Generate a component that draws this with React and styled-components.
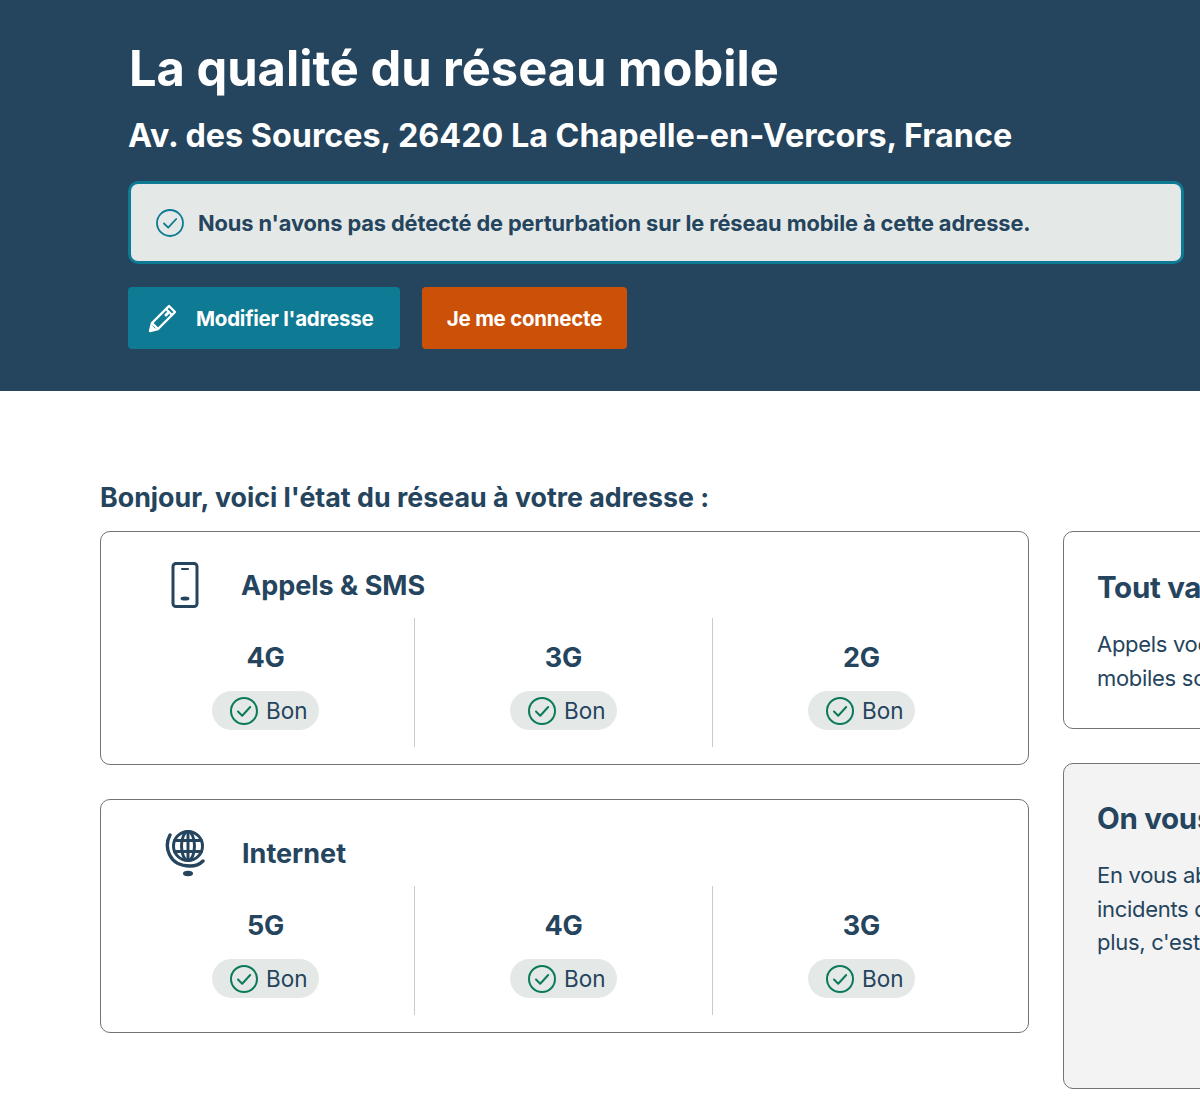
import React from "react";
import styled, { createGlobalStyle } from "styled-components";

const Global = createGlobalStyle`
  html, body { margin: 0; padding: 0; background: #fff; }
  body { font-family: "Inter", "Noto Sans", sans-serif; color: #25445d; }
`;
const Page = styled.div`width: 1200px; height: 1114px; overflow: hidden;`;
const Hero = styled.header`
  background: #25445d; height: 391px; box-sizing: border-box; padding: 38px 16px 0 128px; color: #fff;
`;
const Title = styled.h1`margin: 1px 0 0 1px; font-size: 48.8px; line-height: 60px; font-weight: 700; white-space: nowrap;`;
const Subtitle = styled.h2`margin: 17px 0 0; font-size: 32.3px; line-height: 40px; font-weight: 700; white-space: nowrap;`;
const Alert = styled.div`
  margin-top: 25px; height: 83px; box-sizing: border-box; border: 3px solid #0e7a93; border-radius: 10px;
  background: #e4e9e8; display: flex; align-items: center; gap: 14px; padding-left: 25px;
  color: #25445d; font-size: 21.8px; font-weight: 700; letter-spacing: -0.1px;
`;
const Actions = styled.div`display: flex; gap: 22px; margin-top: 23px;`;
const Button = styled.div`
  height: 62px; box-sizing: border-box; border-radius: 4px; display: flex; align-items: center;
  justify-content: ${p => (p.$start ? "flex-start" : "center")}; padding-left: ${p => (p.$start ? 20 : 0)}px;
  width: ${p => p.$w}px; gap: 18px; background: ${p => p.$bg}; color: #fff; font-size: 20.5px; font-weight: 700; letter-spacing: -0.25px;
`;
const Main = styled.main`padding: 90px 0 0 100px;`;
const Heading = styled.h3`margin: 0; font-size: 26.8px; line-height: 32px; font-weight: 700;`;
const Columns = styled.div`display: flex; gap: 34px; margin-top: 18px; align-items: flex-start;`;
const Left = styled.div`width: 929px; flex: none; display: flex; flex-direction: column; gap: 34px;`;
const Right = styled.div`width: 420px; flex: none; display: flex; flex-direction: column; gap: 34px;`;
const Card = styled.section`
  height: 234px; box-sizing: border-box; border: 1px solid #6f7478; border-radius: 10px; padding: 0 17px 17px 16px;
`;
const CardHead = styled.div`height: 86px; box-sizing: border-box; padding-top: 20px; padding-left: ${p => p.$pad}px; display: flex; align-items: center;`;
const IconSlot = styled.div`width: ${p => p.$w}px; flex: none; display: flex;`;
const CardTitle = styled.div`font-size: 27px; font-weight: 700; white-space: nowrap;`;
const Cells = styled.div`display: grid; grid-template-columns: repeat(3, 298px); height: 129px;`;
const Cell = styled.div`
  display: flex; flex-direction: column; align-items: center; box-sizing: border-box; padding-top: 22px;
  border-right: 1px solid ${p => (p.$last ? "transparent" : "#c8cbcd")};
`;
const Tech = styled.div`font-size: 27px; line-height: 36px; font-weight: 700; letter-spacing: -0.2px;`;
const Pill = styled.div`
  margin-top: 15px; width: 107px; height: 39px; box-sizing: border-box; border-radius: 20px; background: #e4e9e8;
  display: flex; align-items: center; gap: 8px; padding-left: 18px; font-size: 22.5px; font-weight: 400;
`;
const Info = styled.section`
  box-sizing: border-box; height: ${p => p.$h}px; border: 1px solid #6f7478; border-radius: 10px;
  background: ${p => p.$bg || "#fff"}; padding: ${p => p.$pt}px 20px 0 33px;
`;
const InfoTitle = styled.div`font-size: 29.5px; line-height: 38px; font-weight: 700; letter-spacing: -0.3px; white-space: nowrap;`;
const InfoText = styled.p`margin: 22px 0 0; font-size: 22px; line-height: 33.5px; font-weight: 400; letter-spacing: -0.3px; white-space: nowrap;`;

const Check = ({ size, color, sw = 1.3 }) => (
  <svg width={size} height={size} viewBox="0 0 28 28" fill="none" stroke={color} strokeWidth={sw * 28 / size} strokeLinecap="round" strokeLinejoin="round" style={{ flex: "none" }}>
    <circle cx="14" cy="14" r="13" />
    <path d="M8 14.5l4.2 4.2L20.2 10" />
  </svg>
);
const Pencil = () => (
  <svg width="30" height="30" viewBox="0 0 30 30" fill="none" stroke="#fff" strokeWidth="2.400" strokeLinejoin="round" strokeLinecap="round">
    <path d="M2 28l2-8L21 3l6 6-17 17-8 2z" />
    <path d="M4 20l6 6M18 6l6 6" />
    <path d="M19.500 10.500l-1.500 1.500" strokeWidth="3" />
    <path d="M3 27l3-1-2-2z" fill="#fff" />
  </svg>
);
const Phone = () => (
  <svg width="28" height="46" viewBox="0 0 28 46" fill="none" stroke="#25445d" strokeWidth="3" strokeLinecap="round">
    <rect x="2" y="1.500" width="24" height="43" rx="3" />
    <path d="M11 7h6" strokeWidth="2" />
    <ellipse cx="14" cy="36.500" rx="3.500" ry="1" fill="#25445d" strokeWidth="2" />
  </svg>
);
const Globe = () => (
  <svg width="42" height="48" viewBox="0 0 42 48" fill="none" stroke="#25445d" strokeWidth="3" strokeLinecap="round">
    <circle cx="23" cy="17" r="14.500" />
    <ellipse cx="23" cy="17" rx="6.500" ry="14.500" />
    <path d="M23 2.500v29M9.500 11.500h27M9.500 22.500h27" />
    <path d="M5 6C-1 17 3 37 25 37c5 0 10-2 13-5" strokeWidth="3.400" />
    <ellipse cx="23" cy="44.500" rx="4" ry="1.800" fill="#25445d" strokeWidth="2" />
  </svg>
);

const TechCell = ({ label, last }) => (
  <Cell $last={last}>
    <Tech>{label}</Tech>
    <Pill><Check size={28} color="#0b7a5a" sw={2} />Bon</Pill>
  </Cell>
);

export default function App() {
  return (
    <Page>
      <Global />
      <Hero>
        <Title>La qualité du réseau mobile</Title>
        <Subtitle>Av. des Sources, 26420 La Chapelle-en-Vercors, France</Subtitle>
        <Alert><Check size={28} color="#0e7a93" sw={1.800} />Nous n'avons pas détecté de perturbation sur le réseau mobile à cette adresse.</Alert>
        <Actions>
          <Button $start $w={272} $bg="#0e7a93"><Pencil />Modifier l'adresse</Button>
          <Button $w={205} $bg="#cc5108">Je me connecte</Button>
        </Actions>
      </Hero>
      <Main>
        <Heading>Bonjour, voici l'état du réseau à votre adresse :</Heading>
        <Columns>
          <Left>
            <Card>
              <CardHead $pad={54}><IconSlot $w={70}><Phone /></IconSlot><CardTitle>Appels &amp; SMS</CardTitle></CardHead>
              <Cells><TechCell label="4G" /><TechCell label="3G" /><TechCell label="2G" last /></Cells>
            </Card>
            <Card>
              <CardHead $pad={48}><IconSlot $w={77}><Globe /></IconSlot><CardTitle>Internet</CardTitle></CardHead>
              <Cells><TechCell label="5G" /><TechCell label="4G" /><TechCell label="3G" last /></Cells>
            </Card>
          </Left>
          <Right>
            <Info $h={198} $pt={36}>
              <InfoTitle>Tout va bien</InfoTitle>
              <InfoText>Appels vocaux, SMS et internet<br />mobiles sont disponibles.</InfoText>
            </Info>
            <Info $h={326} $bg="#f3f3f4" $pt={35}>
              <InfoTitle>On vous informe</InfoTitle>
              <InfoText>En vous abonnant aux alertes<br />incidents du réseau, et en<br />plus, c'est gratuit.</InfoText>
            </Info>
          </Right>
        </Columns>
      </Main>
    </Page>
  );
}
